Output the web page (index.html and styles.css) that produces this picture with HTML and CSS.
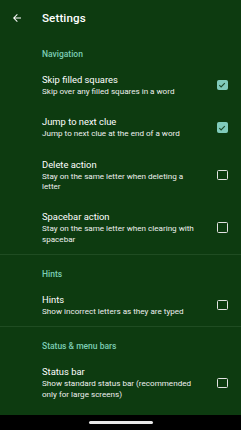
FILE: index.html
```html
<!DOCTYPE html>
<html>
<head>
<meta charset="utf-8">
<link rel="stylesheet" href="styles.css">
</head>
<body>
<div class="screen">
  <header class="toolbar">
    <svg class="back" viewBox="0 0 24 24" width="12" height="12"><path d="M20 11H7.83l5.59-5.59L12 4l-8 8 8 8 1.41-1.41L7.83 13H20v-2z" fill="#fff"/></svg>
    <span class="title">Settings</span>
  </header>
  <main class="list">
    <div class="category">Navigation</div>
    <div class="pref">
      <div class="text"><div class="pt">Skip filled squares</div><div class="ps">Skip over any filled squares in a word</div></div>
      <div class="widget"><span class="cb on"><svg viewBox="0 0 10 10" width="10" height="10"><path d="M2.3 5.2l1.8 1.8 3.7-3.9" fill="none" stroke="#1c4a2a" stroke-width="1.1"/></svg></span></div>
    </div>
    <div class="pref">
      <div class="text"><div class="pt">Jump to next clue</div><div class="ps">Jump to next clue at the end of a word</div></div>
      <div class="widget"><span class="cb on"><svg viewBox="0 0 10 10" width="10" height="10"><path d="M2.3 5.2l1.8 1.8 3.7-3.9" fill="none" stroke="#1c4a2a" stroke-width="1.1"/></svg></span></div>
    </div>
    <div class="pref">
      <div class="text"><div class="pt">Delete action</div><div class="ps">Stay on the same letter when deleting a letter</div></div>
      <div class="widget"><span class="cb"></span></div>
    </div>
    <div class="pref">
      <div class="text"><div class="pt">Spacebar action</div><div class="ps">Stay on the same letter when clearing with spacebar</div></div>
      <div class="widget"><span class="cb"></span></div>
    </div>
    <div class="divider"></div>
    <div class="category">Hints</div>
    <div class="pref">
      <div class="text"><div class="pt">Hints</div><div class="ps">Show incorrect letters as they are typed</div></div>
      <div class="widget"><span class="cb"></span></div>
    </div>
    <div class="divider"></div>
    <div class="category">Status &amp; menu bars</div>
    <div class="pref">
      <div class="text"><div class="pt">Status bar</div><div class="ps">Show standard status bar (recommended only for large screens)</div></div>
      <div class="widget"><span class="cb"></span></div>
    </div>
  </main>
  <footer class="navbar"><span class="pill"></span></footer>
</div>
</body>
</html>
```
FILE: styles.css
```css
* { box-sizing: border-box; }
html, body { margin: 0; padding: 0; }
body {
  width: 241px;
  height: 430px;
  overflow: hidden;
  background: #0d3b10;
  font-family: Roboto, "Noto Sans", sans-serif;
  color: #fff;
}
.screen {
  display: flex;
  flex-direction: column;
  height: 430px;
}
.toolbar {
  height: 35px;
  display: flex;
  align-items: center;
  padding-left: 11px;
  flex: none;
}
.back { display: block; margin-right: 19px; }
.title {
  font-size: 11.6px;
  font-weight: 500;
  letter-spacing: 0.1px;
}
.category {
  padding: 14px 0 5px 42px;
  font-size: 8.5px;
  line-height: 10px;
  font-weight: 500;
  color: #7ccdb4;
}
.list {
  flex: 1;
  display: flex;
  flex-direction: column;
}
.pref {
  display: flex;
  align-items: center;
  padding: 10px 0 10px 42px;
}
.text { width: 160px; }
.pt {
  font-size: 9.4px;
  line-height: 12px;
  color: #fff;
}
.ps {
  font-size: 8.1px;
  line-height: 10.35px;
  color: #eef0ee;
}
.widget {
  flex: 1;
  display: flex;
  justify-content: flex-start;
  padding-left: 15px;
}
.cb {
  width: 10.5px;
  height: 10.5px;
  border: 1.5px solid #e2e2e2;
  border-radius: 1.5px;
  display: flex;
  align-items: center;
  justify-content: center;
}
.cb.on {
  background: #80cbbb;
  border-color: #80cbbb;
}
.cb svg { display: block; flex: none; }
.divider {
  height: 1px;
  background: #1f4c22;
}
.navbar {
  height: 15px;
  background: #000;
  flex: none;
  display: flex;
  justify-content: center;
  padding-top: 6px;
}
.pill {
  width: 64px;
  height: 3px;
  border-radius: 2px;
  background: #e8e8e8;
}
```
